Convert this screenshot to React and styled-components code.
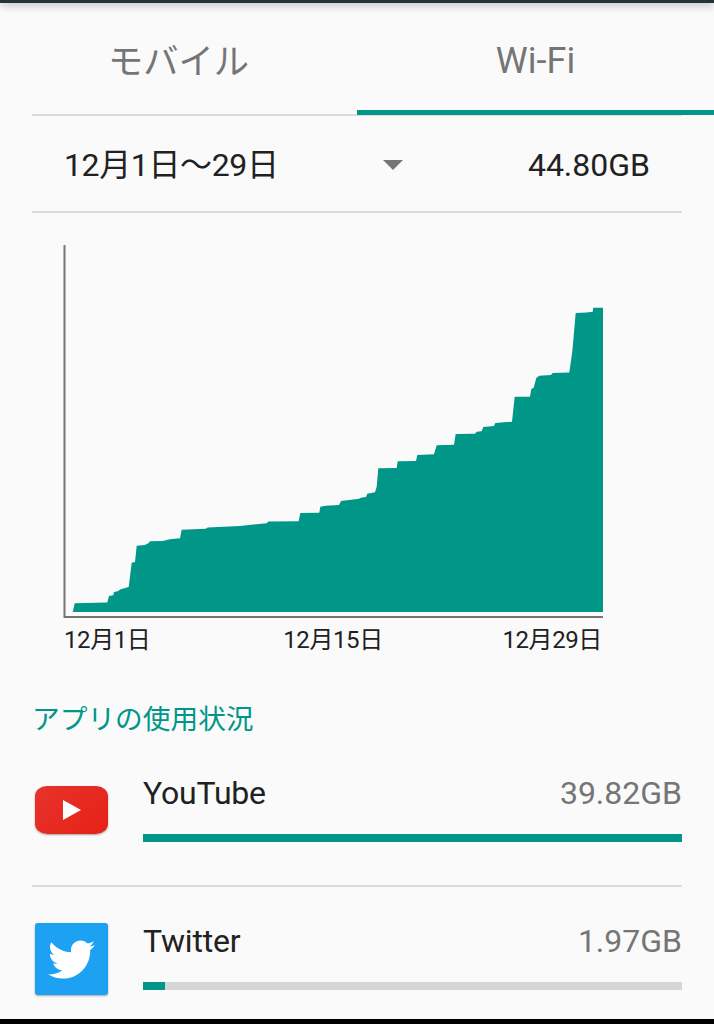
import React from 'react';
import styled, { createGlobalStyle } from 'styled-components';
import { FaTwitter } from 'react-icons/fa';

const GlobalStyle = createGlobalStyle`
  * {
    box-sizing: border-box;
  }

  body {
    margin: 0;
    background-color: #fafafa;
    color: #212121;
    font-family: Roboto, 'Noto Sans CJK JP', sans-serif;
  }
`;

const Screen = styled.div`
  display: flex;
  flex-direction: column;
  height: 1024px;
  overflow: hidden;
  background-color: #fafafa;
`;

const AppBarEdge = styled.div`
  flex: none;
  height: 3px;
  background-color: #263238;
  box-shadow: 0 1px 8px rgba(0, 0, 0, 0.5);
`;

const Tabs = styled.div`
  flex: none;
  display: grid;
  grid-template-columns: 1fr 1fr;
  height: 111px;
`;

const Tab = styled.div`
  display: flex;
  align-items: center;
  justify-content: center;
  height: 112px;
  padding-top: ${props => props.$offset};
  border-bottom: 5px solid ${props => props.$active ? '#009688' : 'transparent'};
  color: #757575;
  font-size: ${props => props.$size};
  line-height: 44px;
  z-index: 1;
`;

const Divider = styled.div`
  flex: none;
  height: 2px;
  margin: 0 32px;
  background-color: #dcdcdc;
`;

const CycleRow = styled.div`
  flex: none;
  display: flex;
  align-items: center;
  height: 95px;
  padding: 3px 64px 0;
  font-size: 32px;
  line-height: 40px;
`;

const Cycle = styled.div`
  display: flex;
  align-items: center;
  justify-content: space-between;
  width: 339px;
  letter-spacing: -0.38px;
`;

const Caret = styled.div`
  border: 10px solid transparent;
  border-top-color: #757575;
  border-bottom: 0;
`;

const Total = styled.div`
  margin-left: auto;
`;

const Chart = styled.div`
  flex: none;
  width: 540px;
  margin: 32px 0 0 63px;
`;

const Plot = styled.svg`
  display: block;
  width: 540px;
  height: 373px;
`;

const ChartLabels = styled.div`
  display: grid;
  grid-template-columns: 1fr 1fr 1fr;
  padding: 4px 1px 0;
  font-size: 24px;
  line-height: 36px;
  letter-spacing: -0.4px;
`;

const ChartLabel = styled.span`
  text-align: ${props => props.$align};
`;

const SectionTitle = styled.div`
  flex: none;
  height: 40px;
  margin: 41px 0 0 32px;
  padding-top: 1px;
  color: #009688;
  font-size: 27.7px;
  line-height: 40px;
`;

const AppRow = styled.div`
  flex: none;
  display: flex;
  height: 146px;
  padding: 0 32px 0 35px;

  &:nth-last-child(2) {
    height: 131px;
  }
`;

const AppIcon = styled.div`
  flex: none;
  display: flex;
  align-items: center;
  justify-content: center;
  width: 73px;
  height: ${props => props.$height};
  margin: ${props => props.$top} 35px 0 0;
  border-radius: ${props => props.$radius};
  background: ${props => props.$background};
  box-shadow: 0 1px 2px rgba(0, 0, 0, 0.35);
  color: #fff;
`;

const Usage = styled.div`
  flex: 1;
  padding-top: 34px;
`;

const UsageHeader = styled.div`
  display: flex;
  justify-content: space-between;
  height: 61px;
  font-size: 32px;
  line-height: 40px;
`;

const AppName = styled.span`
  letter-spacing: -0.2px;
`;

const Amount = styled.span`
  color: #757575;
`;

const Track = styled.div`
  height: 8px;
  background-color: #d6d6d6;
`;

const Bar = styled.div`
  height: 100%;
  background-color: #009688;
`;

const NavBar = styled.div`
  flex: none;
  height: 5px;
  margin-top: auto;
  background-color: #000;
`;

const usagePoints = [
  [72.7, 612], [74.7, 603.3], [107.3, 602.5], [109, 596], [113.3, 595.3],
  [114, 592], [117.7, 591.3], [120.7, 589.3], [128.7, 587], [131.7, 562.7],
  [135, 562], [136.7, 545.7], [144.7, 545], [148.7, 543], [150, 541.3],
  [162.7, 541], [170, 539.3], [180, 538.3], [181.7, 529.7], [205.7, 528.7],
  [207.7, 527.5], [240, 526], [251, 524.7], [266.7, 523.3], [268.3, 521.5],
  [298.7, 521.3], [300.3, 513], [319.3, 512.7], [320.3, 506.7], [325.7, 505.7],
  [339, 505], [341, 501], [359.3, 498.7], [360.7, 497.7], [366, 497],
  [367.3, 493.7], [375, 492.3], [376.7, 486.7], [378.3, 468.3], [396.7, 468],
  [397.7, 461.3], [416, 461], [417.3, 455], [434, 454.3], [436.7, 445.3],
  [454, 444.7], [455.7, 434], [475, 433.7], [476.7, 431.7], [481.7, 431.3],
  [483.3, 427], [494, 426], [495.3, 423], [512, 421.7], [514.7, 396.7],
  [530, 396.7], [531.3, 389], [533.7, 387.7], [536.3, 378], [539.3, 375.7],
  [551, 375], [552.7, 373], [569.3, 372.5], [572.3, 351.7], [575.7, 313],
  [586.7, 312.5], [592.7, 311.7], [593.3, 307.7], [603, 307.7], [603, 612],
];

const YouTubeIcon = () => (
  <AppIcon
    $height="48px"
    $top="47px"
    $radius="12px / 10px"
    $background="linear-gradient(135deg, #e7332b, #e62117)"
  >
    <svg width="18" height="20" viewBox="0 0 18 20">
      <path d="M0 0L18 10L0 20Z" fill="#fff" />
    </svg>
  </AppIcon>
);

const TwitterIcon = () => (
  <AppIcon $height="72px" $top="36px" $radius="3px" $background="#1da1f2">
    <FaTwitter size={47} />
  </AppIcon>
);

const apps = [
  { name: 'YouTube', amount: '39.82GB', percent: 100, Icon: YouTubeIcon },
  { name: 'Twitter', amount: '1.97GB', percent: 4, Icon: TwitterIcon },
];

const UsageChart = () => (
  <Chart>
    <Plot viewBox="63 245 540 373">
      <polygon points={usagePoints.map(p => p.join(',')).join(' ')} fill="#009688" />
      <path d="M64.5 245V617H603" fill="none" stroke="#757575" strokeWidth="2" />
    </Plot>
    <ChartLabels>
      <ChartLabel $align="left">12月1日</ChartLabel>
      <ChartLabel $align="center">12月15日</ChartLabel>
      <ChartLabel $align="right">12月29日</ChartLabel>
    </ChartLabels>
  </Chart>
);

const App = () => {
  return (
    <Screen lang="ja">
      <GlobalStyle />
      <AppBarEdge />
      <Tabs>
        <Tab $size="35.3px" $offset="11px">モバイル</Tab>
        <Tab $size="36px" $offset="8px" $active>Wi-Fi</Tab>
      </Tabs>
      <Divider />
      <CycleRow>
        <Cycle>
          <span>12月1日～29日</span>
          <Caret />
        </Cycle>
        <Total>44.80GB</Total>
      </CycleRow>
      <Divider />
      <UsageChart />
      <SectionTitle>アプリの使用状況</SectionTitle>
      {apps.map(({ name, amount, percent, Icon }, index) => (
        <React.Fragment key={name}>
          {index > 0 && <Divider />}
          <AppRow>
            <Icon />
            <Usage>
              <UsageHeader>
                <AppName>{name}</AppName>
                <Amount>{amount}</Amount>
              </UsageHeader>
              <Track>
                <Bar style={{ width: `${percent}%` }} />
              </Track>
            </Usage>
          </AppRow>
        </React.Fragment>
      ))}
      <NavBar />
    </Screen>
  );
};

export default App;
